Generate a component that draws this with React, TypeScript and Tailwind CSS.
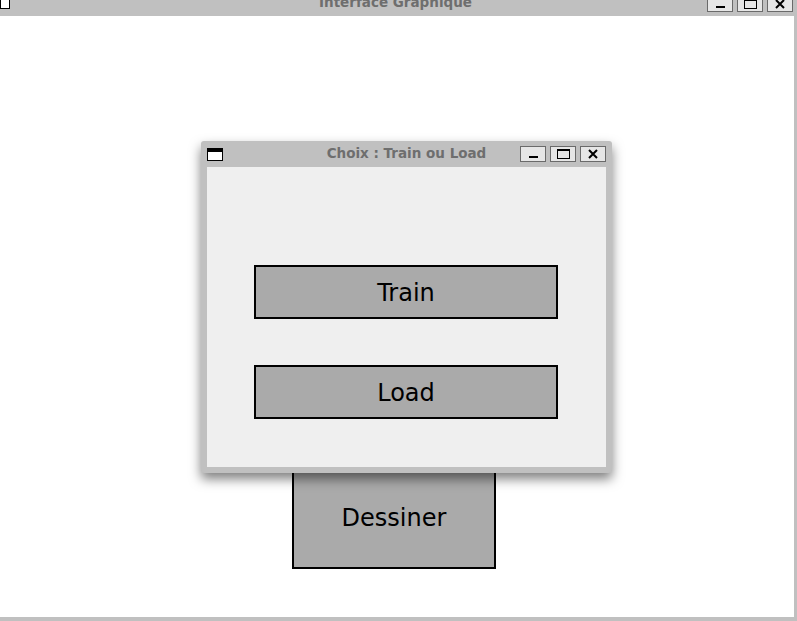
function TitleButtons() {
  const box =
    "w-[26px] h-[16px] border border-[#6a6a6a] bg-[#e6e6e6] flex items-center justify-center";
  return (
    <div className="flex gap-[4px]">
      <div className={box}>
        <div className="w-[9px] h-[2px] bg-black mt-[6px]" />
      </div>
      <div className={box}>
        <div className="w-[13px] h-[10px] border border-black border-t-2" />
      </div>
      <div className={box}>
        <svg width="12" height="12" viewBox="0 0 12 12">
          <path d="M2 2 L10 10 M10 2 L2 10" stroke="black" strokeWidth={2} />
        </svg>
      </div>
    </div>
  );
}

export default function App() {
  return (
    <div
      className="relative w-[797px] h-[621px] overflow-hidden bg-[#c0c0c0]"
      style={{ fontFamily: '"DejaVu Sans", sans-serif' }}
    >
      {/* Outer window title bar */}
      <div className="relative h-[16px] flex items-end">
        <div className="absolute left-0 top-[-6px] w-[10px] h-[15px] bg-white border border-black border-t-[4px]" />
        <div className="absolute left-0 right-0 top-[-6px] pr-[6px] text-center text-[13.5px] font-bold text-[#6e6e6e] leading-[16px]">
          Interface Graphique
        </div>
        <div className="absolute right-[4px] top-[-4px]">
          <TitleButtons />
        </div>
      </div>

      {/* Outer content */}
      <div className="w-[794px] h-[601px] bg-white pt-[451px] pl-[292px]">
        <div className="w-[204px] h-[102px] bg-[#aaaaaa] border-2 border-black flex items-center justify-center text-[24px] text-black">
          Dessiner
        </div>
      </div>

      {/* Dialog */}
      <div className="absolute left-[201px] top-[141px] w-[411px] h-[332px] rounded-[3px] bg-[#c0c0c0] shadow-[0_6px_12px_rgba(0,0,0,0.5)] flex flex-col px-[6px] pb-[6px]">
        <div className="relative h-[26px] flex items-center">
          <div className="w-[16px] h-[13px] bg-white border border-black border-t-[4px] mt-[1px]" />
          <div className="absolute left-0 right-0 top-[4px] text-center text-[13.5px] font-bold text-[#6e6e6e] leading-[16px]">
            Choix : Train ou Load
          </div>
          <div className="absolute right-0 top-[5px]">
            <TitleButtons />
          </div>
        </div>
        <div className="flex-1 bg-[#efefef] flex flex-col pl-[47px] pt-[98px] gap-[46px]">
          <div className="w-[304px] h-[54px] pt-[2px] bg-[#aaaaaa] border-2 border-black flex items-center justify-center text-[24px] text-black">
            Train
          </div>
          <div className="w-[304px] h-[54px] pt-[2px] bg-[#aaaaaa] border-2 border-black flex items-center justify-center text-[24px] text-black">
            Load
          </div>
        </div>
      </div>
    </div>
  );
}
